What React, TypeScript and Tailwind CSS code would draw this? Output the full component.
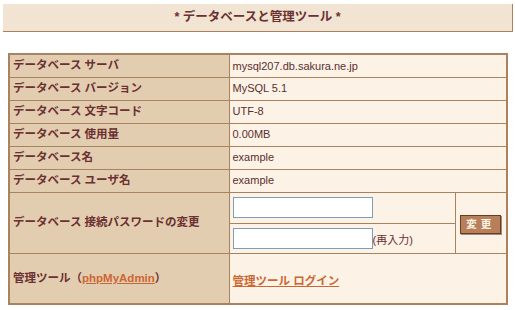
const JP = "font-['Liberation_Sans','Noto_Sans_CJK_JP',sans-serif]"

const rows: [string, string][] = [
  ['データベース サーバ', 'mysql207.db.sakura.ne.jp'],
  ['データベース バージョン', 'MySQL 5.1'],
  ['データベース 文字コード', 'UTF-8'],
  ['データベース 使用量', '0.00MB'],
  ['データベース名', 'example'],
  ['データベース ユーザ名', 'example'],
]

const labelCell = 'border border-[#a9825f] bg-[#e3cdb1] pl-[3px] text-[11.5px] font-bold text-[#6b3030]'
const valueCell = 'border border-[#a9825f] bg-[#fdf2e6] pl-[3px] text-[11px] text-[#5a2f2f]'

export default function App() {
  return (
    <div className={`${JP} min-h-[310px] w-[515px] bg-white pt-[4px] pl-[3px]`}>
      {/* title bar */}
      <div className="flex h-[28px] w-[510px] items-center justify-center border-r border-b border-[#a9825f] bg-[#f1e4d3] text-[12.5px] font-bold text-[#6b3030]">
        * データベースと管理ツール *
      </div>

      <table className="mt-[21px] ml-[5px] w-[500px] border-collapse border-2 border-[#a9825f]">
        <tbody>
          {rows.map(([label, value]) => (
            <tr key={label} className="h-[23px]">
              <td className={`${labelCell} w-[220px]`}>{label}</td>
              <td className={valueCell} colSpan={2}>
                {value}
              </td>
            </tr>
          ))}

          <tr className="h-[31px]">
            <td className={labelCell} rowSpan={2}>
              データベース 接続パスワードの変更
            </td>
            <td className={`${valueCell} w-[226px]`}>
              <input type="text" className="block h-[21px] w-[140px] border border-[#7f9db9] bg-white" />
            </td>
            <td className="border border-[#a9825f] bg-[#fdf2e6] text-center" rowSpan={2}>
              <button className="mt-[3px] h-[19px] w-[41px] border border-[#6e3a1c] bg-[#b8805a] text-[10.5px] font-bold tracking-[4px] text-[#fff5e8] shadow-[1px_1px_0_#9a8f86]">
                変更
              </button>
            </td>
          </tr>
          <tr className="h-[30px]">
            <td className={valueCell}>
              <div className="flex items-end">
                <input type="text" className="block h-[21px] w-[140px] border border-[#7f9db9] bg-white" />
                <span className="text-[11px] text-[#6b3030]">(再入力)</span>
              </div>
            </td>
          </tr>

          <tr className="h-[51px]">
            <td className={labelCell}>
              管理ツール（
              <a className="text-[11.5px] text-[#cc6633] underline">phpMyAdmin</a>）
            </td>
            <td className={`${valueCell} pt-[6px]`} colSpan={2}>
              <a className="text-[11.5px] font-bold text-[#cc6633] underline">管理ツール ログイン</a>
            </td>
          </tr>
        </tbody>
      </table>
    </div>
  )
}
